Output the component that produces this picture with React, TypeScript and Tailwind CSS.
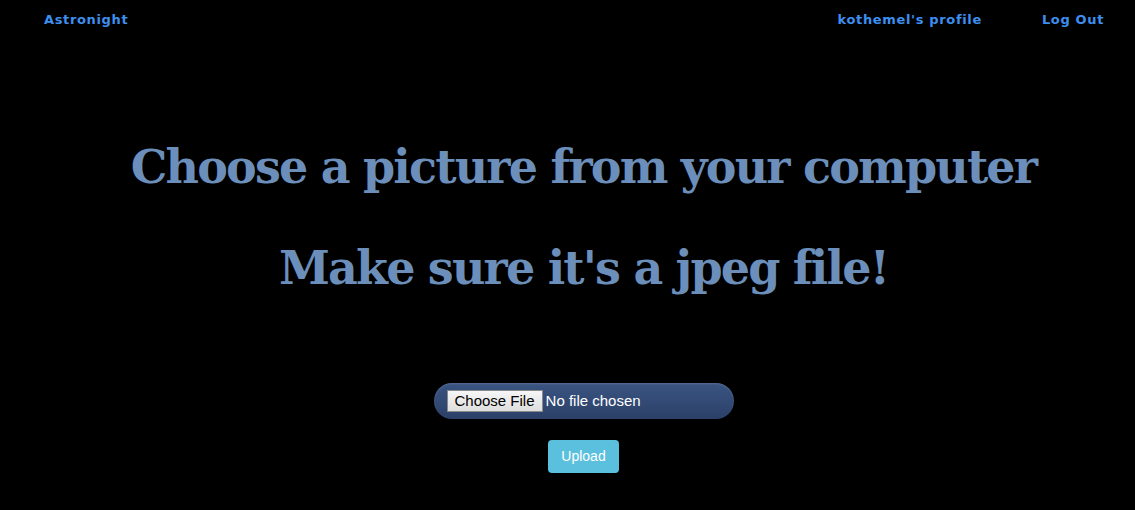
export default function App() {
  const nav = "text-[13px] font-bold tracking-[0.05em] text-[#3d8fef]";
  const heading = "text-[46px] font-bold leading-[56px] tracking-[-1.8px] text-[#6b8fba]";
  return (
    <div className="min-h-[510px] w-full bg-black" style={{ fontFamily: '"Liberation Sans", Arial, sans-serif' }}>
      <header className="flex h-[39px] items-center justify-between pl-[44px] pr-[31px]" style={{ fontFamily: '"DejaVu Sans", "Liberation Sans", sans-serif' }}>
        <a className={nav}>Astronight</a>
        <nav className="flex items-center gap-[60px]">
          <a className={nav}>kothemel's profile</a>
          <a className={nav}>Log Out</a>
        </nav>
      </header>

      <main className="flex flex-col items-center pl-[32px]">
        <h1 className={`mt-[100px] ${heading}`} style={{ fontFamily: '"DejaVu Serif", "Liberation Serif", serif' }}>
          Choose a picture from your computer
        </h1>
        <h2 className={`mt-[45px] ${heading}`} style={{ fontFamily: '"DejaVu Serif", "Liberation Serif", serif' }}>
          Make sure it's a jpeg file!
        </h2>

        <div className="mt-[87px] flex h-[36px] w-[300px] items-center rounded-full bg-gradient-to-b from-[#3a5582] to-[#2b4068] pl-[13px] shadow-[inset_0_1px_2px_rgba(255,255,255,0.15)]">
          <span className="flex h-[22px] items-center border border-[#8a8a8a] bg-gradient-to-b from-[#f6f6f6] to-[#dedede] px-[7px] text-[15px] text-black">
            Choose File
          </span>
          <span className="ml-[3px] text-[15px] text-white">No file chosen</span>
        </div>

        <button className="mt-[21px] h-[33px] w-[71px] rounded-[4px] bg-[#5bc0de] text-[14px] text-white">
          Upload
        </button>
      </main>
    </div>
  );
}
